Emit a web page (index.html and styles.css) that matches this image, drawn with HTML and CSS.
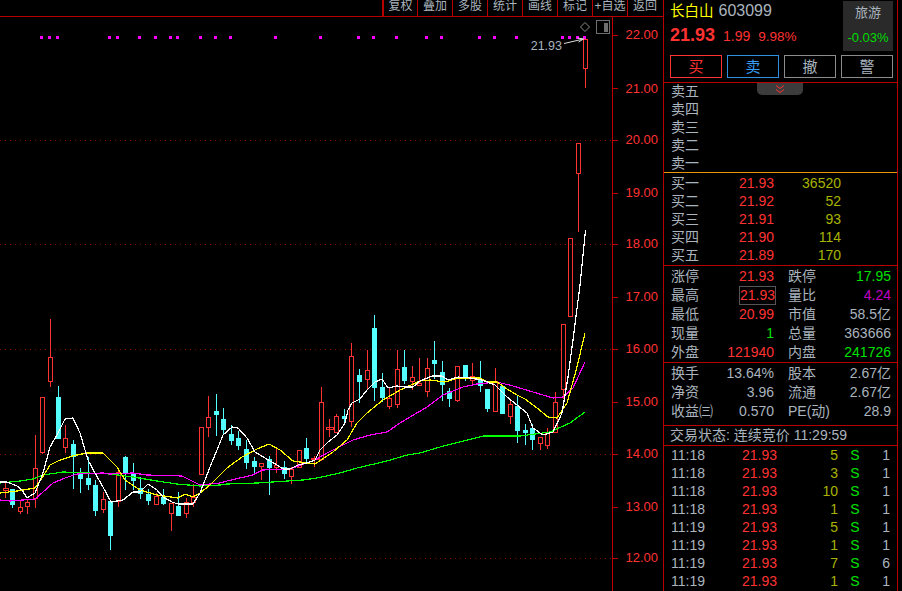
FILE: index.html
```html
<!DOCTYPE html>
<html lang="zh-CN">
<head>
<meta charset="utf-8">
<title>长白山 603099</title>
<link rel="stylesheet" href="styles.css">
</head>
<body>
<div class="app">
  <main class="main">
    <nav class="toolbar">
      <span class="tool tool-first">复权</span><span class="tool">叠加</span><span class="tool">多股</span><span class="tool">统计</span><span class="tool">画线</span><span class="tool">标记</span><span class="tool">+自选</span><span class="tool">返回</span>
    </nav>
    <svg class="chart" viewBox="0 17 663 574" width="663" height="574" aria-label="K线图">
      <path class="grid" d="M0 140.5H612M0 244.5H612M0 349.5H612M0 454.5H612M0 558.5H612"/>
      <path class="dots" d="M40 36h3v3h-3zM48 36h3v3h-3zM56 36h3v3h-3zM108 36h3v3h-3zM116 36h3v3h-3zM138 36h3v3h-3zM154 36h3v3h-3zM169 36h3v3h-3zM176 36h3v3h-3zM199 36h3v3h-3zM214 36h3v3h-3zM229 36h3v3h-3zM274 36h3v3h-3zM319 36h3v3h-3zM357 36h3v3h-3zM372 36h3v3h-3zM395 36h3v3h-3zM425 36h3v3h-3zM440 36h3v3h-3zM478 36h3v3h-3zM493 36h3v3h-3zM515 36h3v3h-3zM561 36h3v3h-3zM568 36h3v3h-3zM576 36h3v3h-3zM583 36h3v3h-3z"/>
      <path class="wick-up" d="M5.5 483V488M5.5 490V498M3 488h5v2h-5zM20.5 500V507M20.5 511V514M27.5 500V502M27.5 506V514M35.5 435V468M35.5 498V508M42.5 452V454M50.5 319V357M50.5 381V387M65.5 425V438M65.5 447V453M103.5 492V499M103.5 509V513M118.5 471V472M118.5 501V507M156.5 493V496M171.5 513V531M186.5 498V502M186.5 513V518M193.5 484V497M193.5 502V507M208.5 396V417M208.5 427V437M261.5 466V480M276.5 447V465M276.5 467V473M291.5 467V469M291.5 476V484M314.5 456V467M311 458h7v1h-7zM321.5 387V402M321.5 459V461M329.5 419V437M326 427h7v2h-7zM336.5 414V416M351.5 343V356M351.5 421V427M367.5 350V370M367.5 379V390M389.5 387V398M389.5 406V409M397.5 350V369M397.5 404V408M412.5 366V377M412.5 381V390M419.5 358V383M427.5 358V368M427.5 391V397M457.5 400V402M472.5 363V376M472.5 380V385M495.5 368V381M510.5 400V404M510.5 416V424M540.5 443V450M547.5 428V432M547.5 445V449M555.5 392V402M563.5 389V399M578.5 173V232M585.5 68V88"/>
      <path class="body-up" d="M18.5 507h4v4h-4zM25.5 502h4v4h-4zM33.500 468h4v30h-4zM40.500 397h4v55h-4zM48.500 357h4v24h-4zM63.500 438h4v9h-4zM101.500 499h4v10h-4zM116.500 472h4v29h-4zM154.500 496h4v8h-4zM169.500 503h4v10h-4zM184.500 502h4v11h-4zM191.500 497h4v5h-4zM199.500 427h4v47h-4zM206.500 417h4v10h-4zM259.500 463h4v3h-4zM274.500 465h4v2h-4zM289.500 469h4v7h-4zM297.500 450h4v17h-4zM319.500 402h4v57h-4zM334.500 416h4v16h-4zM349.500 356h4v65h-4zM365.500 370h4v9h-4zM387.500 398h4v8h-4zM395.500 369h4v35h-4zM410.500 377h4v4h-4zM417.500 383h4v2h-4zM425.500 368h4v23h-4zM455.500 366h4v34h-4zM470.500 376h4v4h-4zM493.500 381h4v30h-4zM508.500 404h4v12h-4zM538.500 437h4v6h-4zM545.500 432h4v13h-4zM553.500 402h4v30h-4zM561.500 324h4v65h-4zM568.500 238h4v78h-4zM576.500 143h4v30h-4zM583.500 39h4v29h-4z"/>
      <path class="wick-down" d="M12.5 489V508M58.5 386V439M73.5 440V489M80.500 468V493M88.500 457V490M95.500 480V516M110.500 501V550M125.500 456V490M133.500 463V490M140.500 477V499M148.500 489V505M163.500 489V505M178.500 492V516M216.500 394V436M223.500 408V435M231.500 425V445M238.500 431V450M246.500 440V469M254.500 457V474M269.500 456V495M284.500 461V479M306.500 438V463M344.500 409V425M359.500 369V403M374.500 315V401M382.500 373V402M404.500 350V384M434.500 341V379M442.500 361V401M449.500 388V407M465.500 365V381M480.500 361V392M487.500 389V412M502.500 386V414M517.500 395V443M525.500 424V445M532.500 424V450"/>
      <path class="body-down" d="M10 489h5v16h-5zM56 397h5v42h-5zM71 444h5v13h-5zM78 472h5v7h-5zM86 478h5v7h-5zM93 485h5v26h-5zM108 501h5v35h-5zM123 457h5v16h-5zM131 473h5v8h-5zM138 488h5v6h-5zM146 494h5v7h-5zM161 497h5v7h-5zM176 506h5v10h-5zM214 411h5v4h-5zM221 419h5v11h-5zM229 434h5v7h-5zM236 438h5v8h-5zM244 449h5v14h-5zM252 461h5v6h-5zM267 459h5v9h-5zM282 467h5v7h-5zM304 448h5v11h-5zM342 416h5v3h-5zM357 375h5v7h-5zM372 328h5v60h-5zM380 387h5v11h-5zM402 367h5v14h-5zM432 360h5v4h-5zM440 372h5v13h-5zM447 391h5v8h-5zM463 365h5v13h-5zM478 380h5v6h-5zM485 389h5v20h-5zM500 386h5v28h-5zM515 406h5v25h-5zM523 430h5v3h-5zM530 428h5v12h-5z"/>
      <polyline class="ma ma-green" points="0,483 20,481 33,479 43,475 63,472 87,473 110,474 133,477 157,481 177,484 200,486 220,485 227,484 257,483 273,482 303,480 317,478 340,473 357,468 387,461 407,455 420,453 440,447 460,442 483,436 520,436 550,432 570,423 585,412"/>
      <polyline class="ma ma-magenta" points="0,500 10,501 35,499 43,492 53,483 65,478 77,474 103,473 110,474 133,473 147,475 182,476 192,481 200,485 220,483 227,481 253,475 262,470 290,469 315,460 327,453 343,445 353,440 370,435 387,432 400,423 410,417 427,407 443,395 463,387 477,384 497,382 513,386 543,395 553,398 563,397 573,388 585,362"/>
      <polyline class="ma ma-yellow" points="0,493 17,491 35,488 42,478 50,465 58,461 72,456 87,453 103,453 117,467 125,480 140,490 157,495 178,498 185,494 193,497 200,493 210,485 227,468 242,457 257,449 269,444 280,450 293,461 307,463 315,464 333,452 347,440 357,423 367,413 383,400 400,390 420,381 430,380 445,382 458,378 480,378 487,382 497,382 507,389 517,395 525,399 537,408 548,417 557,418 567,403 577,367 585,333"/>
      <polyline class="ma ma-white" points="0,482 7,482 17,486 22,490 27,498 35,493 43,473 50,447 57,435 65,419 73,418 80,433 88,460 95,473 103,487 111,502 123,500 133,492 140,492 148,484 157,490 163,497 172,502 178,504 193,504 200,493 210,467 217,450 223,435 232,427 238,428 247,438 255,452 265,458 277,465 283,469 290,469 298,465 307,463 315,460 320,450 328,442 337,435 345,423 348,410 352,403 360,399 367,390 375,382 382,379 388,388 397,386 405,387 413,387 420,381 432,376 442,376 448,380 458,377 470,378 482,380 495,385 507,397 517,405 527,413 533,428 543,435 553,432 562,413 568,377 573,340 580,285 585.500,230"/>
      <text class="note" x="562" y="50">21.93</text>
      <path class="note-arrow" d="M564 43.500L583.500 39M577.500 38L583.500 39L578.500 42"/>
      <path class="marker" d="M585 22.500L589.500 27L585 31.500L580.500 27Z"/>
      <rect class="view-frame" x="596.500" y="20.500" width="13" height="13"/>
      <rect class="view-fill" x="604" y="23" width="4" height="9"/>
      <path class="axis" d="M612.500 17V591M613 35.500H618M613 88.500H618M613 140.500H618M613 193.500H618M613 244.500H618M613 297.500H618M613 349.500H618M613 402.500H618M613 454.500H618M613 507.500H618M613 558.500H618"/>
      <g class="axis-labels">
        <text x="658" y="39">22.00</text>
        <text x="658" y="93">21.00</text>
        <text x="658" y="144">20.00</text>
        <text x="658" y="197">19.00</text>
        <text x="658" y="248">18.00</text>
        <text x="658" y="301">17.00</text>
        <text x="658" y="353">16.00</text>
        <text x="658" y="406">15.00</text>
        <text x="658" y="458">14.00</text>
        <text x="658" y="511">13.00</text>
        <text x="658" y="562">12.00</text>
      </g>
    </svg>
  </main>

  <aside class="panel">
    <header class="quote">
      <div class="quote-main">
        <div class="title"><span class="name">长白山</span><span class="code">603099</span></div>
        <div class="price-row"><b class="last">21.93</b><span class="change">1.99</span><span class="pct">9.98%</span></div>
      </div>
      <div class="sector"><span class="sector-name">旅游</span><span class="sector-pct">-0.03%</span></div>
      <div class="actions">
        <span class="btn btn-buy">买</span><span class="btn btn-sell">卖</span><span class="btn">撤</span><span class="btn">警</span>
      </div>
    </header>

    <section class="book book-sell">
      <div class="handle"><svg width="12" height="9" viewBox="0 0 12 9"><path d="M2 0.500L6 3.500L10 0.500M2 4.500L6 7.500L10 4.500"/></svg></div>
      <div class="book-row"><span>卖五</span></div>
      <div class="book-row"><span>卖四</span></div>
      <div class="book-row"><span>卖三</span></div>
      <div class="book-row"><span>卖二</span></div>
      <div class="book-row"><span>卖一</span></div>
    </section>
    <section class="book book-buy">
      <div class="book-row"><span>买一</span><span class="num up">21.93</span><span class="num vol">36520</span></div>
      <div class="book-row"><span>买二</span><span class="num up">21.92</span><span class="num vol">52</span></div>
      <div class="book-row"><span>买三</span><span class="num up">21.91</span><span class="num vol">93</span></div>
      <div class="book-row"><span>买四</span><span class="num up">21.90</span><span class="num vol">114</span></div>
      <div class="book-row"><span>买五</span><span class="num up">21.89</span><span class="num vol">170</span></div>
    </section>

    <section class="stats stats-price">
      <div class="stat"><span>涨停</span><span class="up">21.93</span></div>
      <div class="stat"><span>跌停</span><span class="down">17.95</span></div>
      <div class="stat"><span>最高</span><span class="up boxed">21.93</span></div>
      <div class="stat"><span>量比</span><span class="purple">4.24</span></div>
      <div class="stat"><span>最低</span><span class="up">20.99</span></div>
      <div class="stat"><span>市值</span><span>58.5亿</span></div>
      <div class="stat"><span>现量</span><span class="down">1</span></div>
      <div class="stat"><span>总量</span><span>363666</span></div>
      <div class="stat"><span>外盘</span><span class="up">121940</span></div>
      <div class="stat"><span>内盘</span><span class="down">241726</span></div>
    </section>
    <section class="stats stats-fin">
      <div class="stat"><span>换手</span><span>13.64%</span></div>
      <div class="stat"><span>股本</span><span>2.67亿</span></div>
      <div class="stat"><span>净资</span><span>3.96</span></div>
      <div class="stat"><span>流通</span><span>2.67亿</span></div>
      <div class="stat"><span>收益㈢</span><span>0.570</span></div>
      <div class="stat"><span>PE(动)</span><span>28.9</span></div>
    </section>

    <div class="status">交易状态: 连续竞价 11:29:59</div>

    <section class="ticks">
      <div class="tick"><span>11:18</span><span class="num up">21.93</span><span class="num vol">5</span><span class="side">S</span><span class="num">1</span></div>
      <div class="tick"><span>11:18</span><span class="num up">21.93</span><span class="num vol">3</span><span class="side">S</span><span class="num">1</span></div>
      <div class="tick"><span>11:18</span><span class="num up">21.93</span><span class="num vol">10</span><span class="side">S</span><span class="num">1</span></div>
      <div class="tick"><span>11:18</span><span class="num up">21.93</span><span class="num vol">1</span><span class="side">S</span><span class="num">1</span></div>
      <div class="tick"><span>11:19</span><span class="num up">21.93</span><span class="num vol">5</span><span class="side">S</span><span class="num">1</span></div>
      <div class="tick"><span>11:19</span><span class="num up">21.93</span><span class="num vol">1</span><span class="side">S</span><span class="num">1</span></div>
      <div class="tick"><span>11:19</span><span class="num up">21.93</span><span class="num vol">7</span><span class="side">S</span><span class="num">6</span></div>
      <div class="tick"><span>11:19</span><span class="num up">21.93</span><span class="num vol">1</span><span class="side">S</span><span class="num">1</span></div>
    </section>
  </aside>
</div>
</body>
</html>
```

FILE: styles.css
```css
* { box-sizing: border-box; }

html, body {
  margin: 0;
  height: 100%;
  background: #000;
  overflow: hidden;
}

body {
  color: #aab4be;
  font: 14px/18px "Liberation Sans", "Noto Sans CJK SC", sans-serif;
}

.app {
  display: flex;
  width: 902px;
  height: 591px;
}

/* Left: toolbar and chart */
.main {
  width: 663px;
  flex: none;
}

.toolbar {
  display: flex;
  justify-content: flex-end;
  height: 17px;
  padding-right: 1px;
  border-bottom: 1px solid #b80000;
  font-size: 12px;
  line-height: 13px;
}

.tool {
  width: 35px;
  border-left: 1px solid #b80000;
  text-align: center;
  white-space: nowrap;
}

.tool-first { border-left-width: 2px; }

.chart {
  display: block;
  font-family: "Liberation Sans", sans-serif;
}

.grid {
  fill: none;
  stroke: #8a0000;
  stroke-dasharray: 1 4;
  shape-rendering: crispEdges;
}

.dots { fill: #ff00ff; shape-rendering: crispEdges; }

.wick-up, .body-up {
  fill: none;
  stroke: #ff3232;
  shape-rendering: crispEdges;
}

.wick-down {
  fill: none;
  stroke: #54ffff;
  shape-rendering: crispEdges;
}

.body-down { fill: #54ffff; shape-rendering: crispEdges; }

.ma {
  fill: none;
  stroke-width: 1.2;
  shape-rendering: crispEdges;
}

.ma-green { stroke: #00ff00; }
.ma-magenta { stroke: #ff00ff; }
.ma-yellow { stroke: #ffff00; }
.ma-white { stroke: #ffffff; }

.note {
  fill: #aab4be;
  font-size: 12.5px;
  text-anchor: end;
}

.note-arrow { fill: none; stroke: #dddddd; }
.marker { fill: none; stroke: #8c8c8c; }
.view-frame { fill: none; stroke: #6e6e6e; }
.view-fill { fill: #6e6e6e; }

.axis {
  fill: none;
  stroke: #c00000;
  shape-rendering: crispEdges;
}

.axis-labels text {
  fill: #ff3232;
  font-size: 13px;
  text-anchor: end;
}

/* Right: quote panel */
.panel {
  width: 235px;
  flex: none;
  height: 591px;
  overflow: hidden;
  border-left: 1px solid #b80000;
  border-right: 1px solid #b80000;
}

.quote {
  display: grid;
  grid-template-columns: 173px 50px;
  grid-template-rows: 50px 27px;
  height: 83px;
  padding: 1px 0 0 6px;
  border-bottom: 1px solid #b80000;
}

.quote-main { min-width: 0; }

.title {
  height: 22px;
  line-height: 20px;
  white-space: nowrap;
}

.name { color: #ffff00; font-size: 14.5px; }

.code {
  margin-left: 5px;
  font-size: 16px;
}

.price-row {
  display: flex;
  align-items: baseline;
  gap: 8px;
  margin-top: 1px;
  line-height: 22px;
  color: #ff3232;
  white-space: nowrap;
}

.last { font-size: 18px; }

.pct { font-size: 13.5px; }

.sector {
  display: flex;
  flex-direction: column;
  align-items: center;
  justify-content: space-between;
  padding: 3px 0 4px;
  background: #2a2a2a;
  font-size: 13px;
}

.sector-pct { color: #00dd00; }

.actions {
  grid-column: 1 / -1;
  display: flex;
  gap: 5px;
  padding-top: 4px;
}

.btn {
  width: 52px;
  height: 23px;
  border: 1px solid #8c8c8c;
  font-size: 15px;
  line-height: 21px;
  text-align: center;
}

.btn-buy { border-color: #ff3232; color: #ff3232; }
.btn-sell { border-color: #2f8fe0; color: #3a9cf0; }

.book {
  padding-left: 7px;
}

.book-sell {
  position: relative;
  height: 91px;
  margin-top: -1px;
  border-bottom: 1px solid #e8960c;
}

.book-buy {
  height: 93px;
  padding-top: 1px;
  border-bottom: 1px solid #b80000;
}

.book-row {
  display: grid;
  grid-template-columns: 40px 63px 67px;
  height: 18px;
}

.handle {
  position: absolute;
  top: 1px;
  left: 93px;
  display: flex;
  justify-content: center;
  align-items: center;
  width: 46px;
  height: 12px;
  border-radius: 0 0 5px 5px;
  background: #3c3c3c;
}

.handle path { fill: none; stroke: #ff3232; }

.num { text-align: right; }
.up { color: #ff3232; }
.down { color: #00e000; }
.purple { color: #c000c0; }
.vol { color: #a8b400; }

.stats {
  display: grid;
  grid-template-columns: 103px 103px;
  grid-auto-rows: 19px;
  column-gap: 14px;
  padding-left: 7px;
  height: 97px;
  border-bottom: 1px solid #b80000;
  line-height: 19px;
}

.stats-price { padding-top: 1px; }

.stats-fin {
  height: 63px;
  padding-top: 1px;
}

.stat {
  display: flex;
  justify-content: space-between;
  white-space: nowrap;
}

.boxed {
  height: 19px;
  margin-right: -2px;
  padding-right: 1px;
  padding-left: 1px;
  outline: 1px solid #555555;
  outline-offset: -1px;
}

.status {
  height: 20px;
  padding-left: 6px;
  border-bottom: 1px solid #b80000;
  line-height: 19px;
  white-space: nowrap;
}

.ticks {
  padding-left: 7px;
}

.tick {
  display: grid;
  grid-template-columns: 60px 46px 61px 34px 18px;
  height: 18px;
}

.side {
  color: #00e000;
  text-align: center;
}
```
